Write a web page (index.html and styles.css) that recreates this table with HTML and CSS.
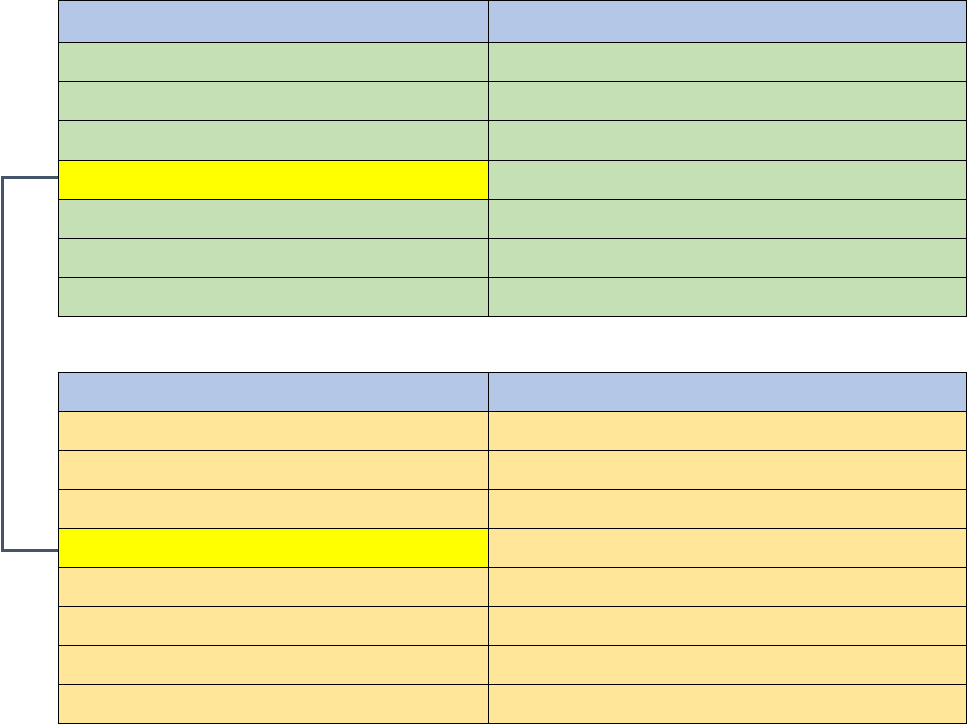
FILE: index.html
```html
<!DOCTYPE html>
<html>
<head>
<meta charset="utf-8">
<link rel="stylesheet" href="styles.css">
</head>
<body>
<div class="page">
  <div class="grid-table">
    <div class="row head"><div class="cell"></div><div class="cell"></div></div>
    <div class="row green"><div class="cell"></div><div class="cell"></div></div>
    <div class="row green"><div class="cell"></div><div class="cell"></div></div>
    <div class="row green tall"><div class="cell"></div><div class="cell"></div></div>
    <div class="row green"><div class="cell mark"></div><div class="cell"></div></div>
    <div class="row green"><div class="cell"></div><div class="cell"></div></div>
    <div class="row green"><div class="cell"></div><div class="cell"></div></div>
    <div class="row green"><div class="cell"></div><div class="cell"></div></div>
  </div>
  <div class="grid-table second">
    <div class="row head short"><div class="cell"></div><div class="cell"></div></div>
    <div class="row amber"><div class="cell"></div><div class="cell"></div></div>
    <div class="row amber"><div class="cell"></div><div class="cell"></div></div>
    <div class="row amber"><div class="cell"></div><div class="cell"></div></div>
    <div class="row amber"><div class="cell mark"></div><div class="cell"></div></div>
    <div class="row amber"><div class="cell"></div><div class="cell"></div></div>
    <div class="row amber"><div class="cell"></div><div class="cell"></div></div>
    <div class="row amber"><div class="cell"></div><div class="cell"></div></div>
    <div class="row amber"><div class="cell"></div><div class="cell"></div></div>
  </div>
  <div class="bracket"></div>
</div>
</body>
</html>
```
FILE: styles.css
```css
html, body {
  margin: 0;
  padding: 0;
  background: #ffffff;
  font-family: "Liberation Sans", Arial, sans-serif;
}
.page {
  position: relative;
  width: 967px;
  height: 724px;
  overflow: hidden;
}
.grid-table {
  margin-left: 58px;
  width: 909px;
  border: 1px solid #000;
  border-right-width: 1px;
  box-sizing: border-box;
  width: 909px;
}
.grid-table.second {
  margin-top: 55px;
}
.row {
  display: grid;
  grid-template-columns: 430px 1fr;
  height: 38px;
  border-bottom: 1px solid #000;
}
.row:last-child {
  border-bottom: none;
}
.row.head {
  height: 41px;
  background: #b4c7e7;
}
.row.head.short {
  height: 38px;
}
.row.tall {
  height: 39px;
}
.row.green {
  background: #c5e0b4;
}
.row.amber {
  background: #ffe699;
}
.cell {
  border-right: 1px solid #000;
}
.cell:last-child {
  border-right: none;
}
.cell.mark {
  background: #ffff00;
}
.bracket {
  position: absolute;
  left: 1px;
  top: 176px;
  width: 57px;
  height: 376px;
  box-sizing: border-box;
  border: 3px solid #44546a;
  border-right: none;
}
```
